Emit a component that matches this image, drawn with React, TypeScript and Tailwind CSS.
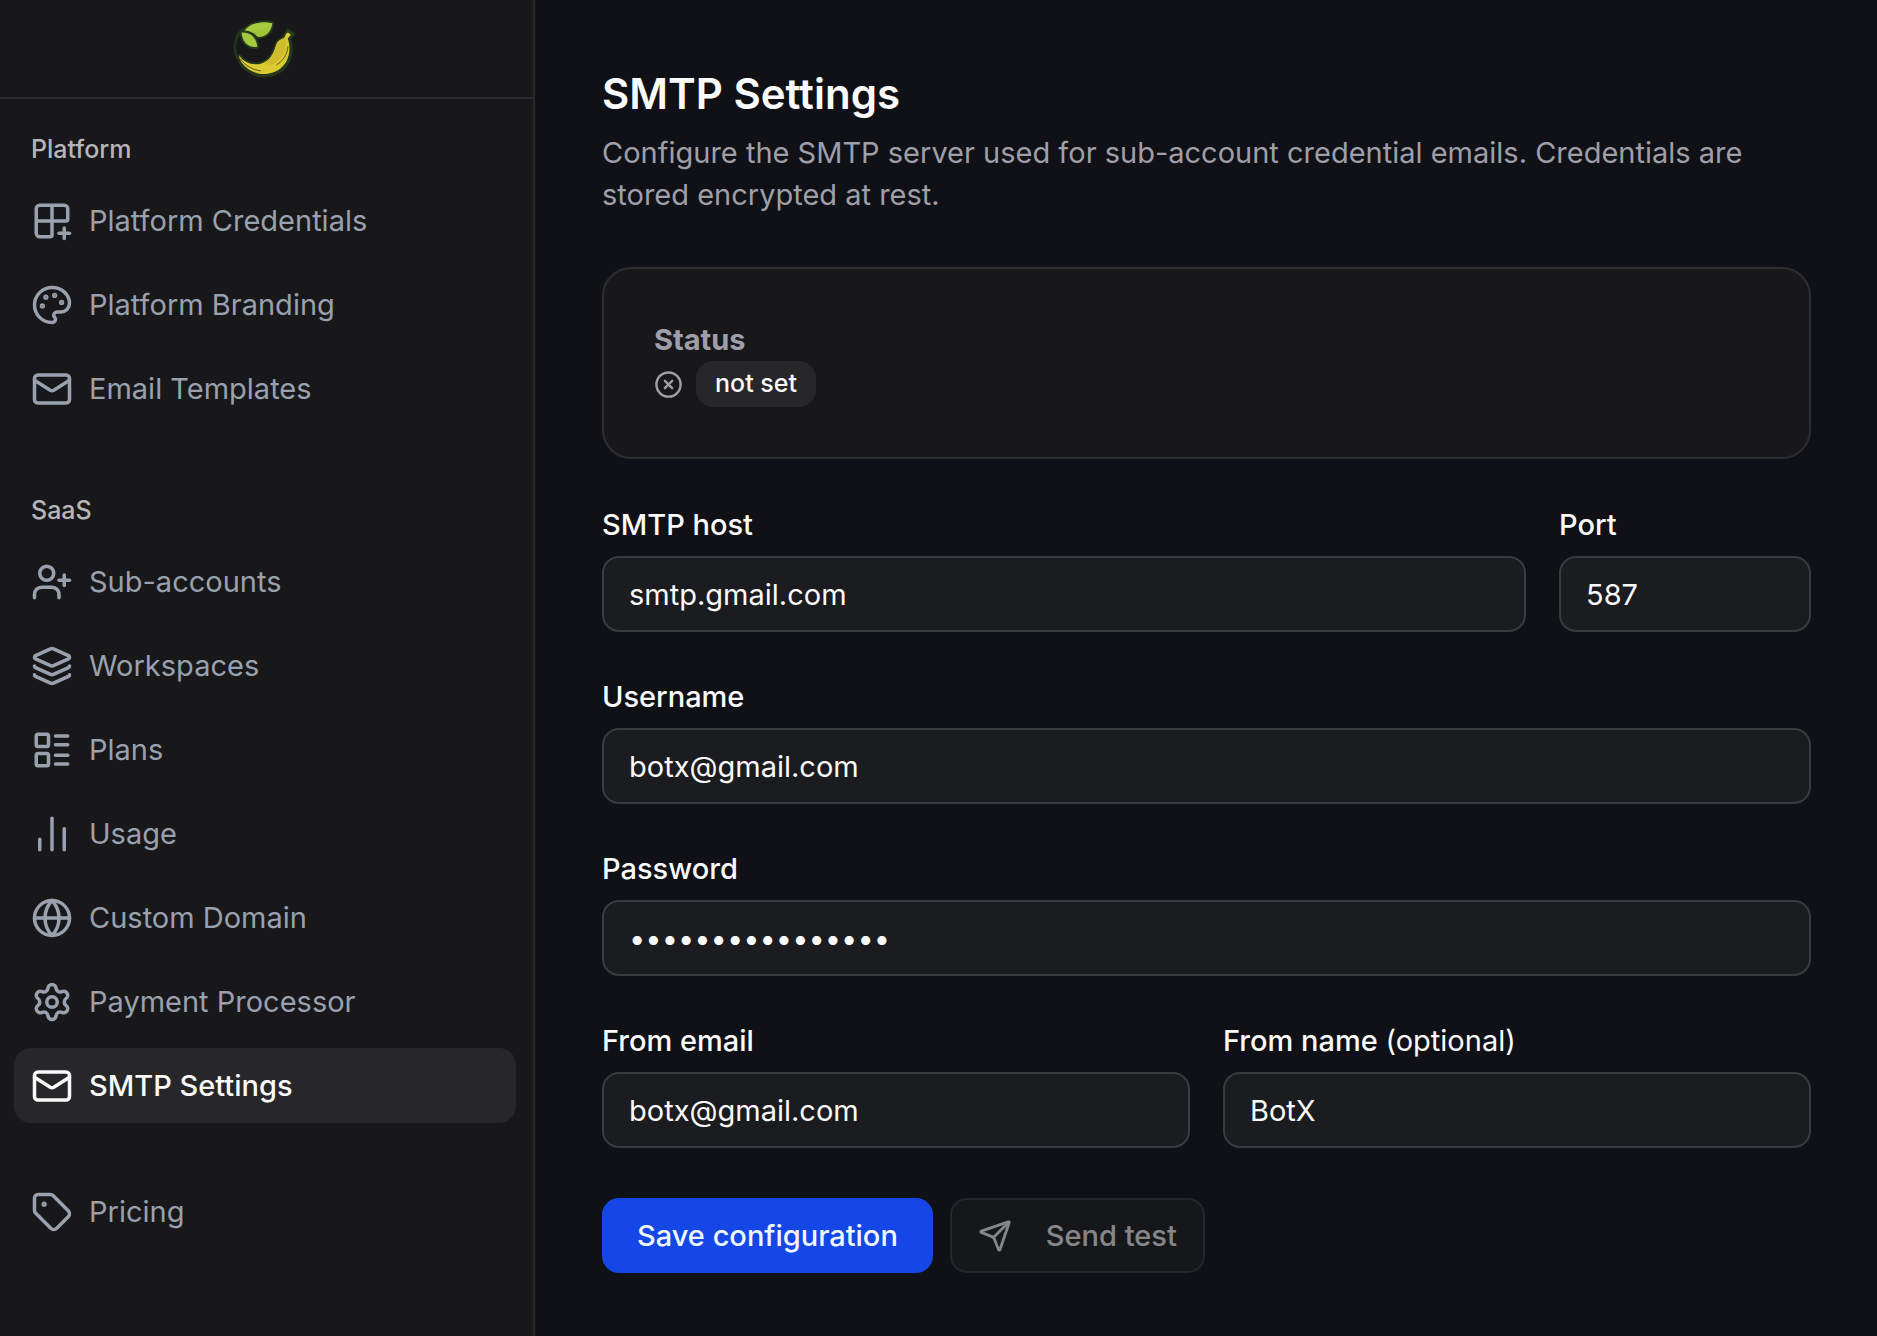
import { useState } from "react"
import type { ReactNode } from "react"
import {
    ChartNoAxesColumn,
    CircleX,
    Globe,
    Grid2x2Plus,
    Layers,
    LayoutList,
    Mail,
    Palette,
    Send,
    Settings,
    Tag,
    UserPlus,
    type LucideIcon
} from "lucide-react"

interface NavItem {
    label : string,
    icon : LucideIcon,
    active? : boolean
}

const platformItems : NavItem[] = [
    { label : "Platform Credentials", icon : Grid2x2Plus },
    { label : "Platform Branding", icon : Palette },
    { label : "Email Templates", icon : Mail },
]

const saasItems : NavItem[] = [
    { label : "Sub-accounts", icon : UserPlus },
    { label : "Workspaces", icon : Layers },
    { label : "Plans", icon : LayoutList },
    { label : "Usage", icon : ChartNoAxesColumn },
    { label : "Custom Domain", icon : Globe },
    { label : "Payment Processor", icon : Settings },
    { label : "SMTP Settings", icon : Mail, active : true },
]

const otherItems : NavItem[] = [
    { label : "Pricing", icon : Tag },
]

export default function App(){
    return (
        <div className="flex min-h-screen bg-[#101116] font-['Inter',sans-serif] text-[29px] text-zinc-50">
            <Sidebar />
            <SmtpSettings />
        </div>
    )
}

function Sidebar(){
    return (
        <aside className="w-[535px] shrink-0 border-r-2 border-[#26282e] bg-[#18181a]">
            <div className="flex h-[99px] items-center justify-center border-b-2 border-[#2c2d30] pr-1.5">
                <Logo />
            </div>
            <nav className="flex flex-col pl-[14px] pr-[17px]">
                <NavGroup title="Platform" items={platformItems} />
                <NavGroup title="SaaS" items={saasItems} />
                <NavGroup items={otherItems} />
            </nav>
        </aside>
    )
}

function NavGroup({title, items} : {title? : string, items : NavItem[]}){
    return (
        <div className="flex flex-col py-[17px]">
            {title && (
                <div className="flex h-[67px] items-center px-[17px] text-[25px] font-medium text-[#b6b6b8]">
                    {title}
                </div>
            )}
            <ul className="flex flex-col gap-[9px] pb-[17px]">
                {items.map(item => <NavLink key={item.label} item={item} />)}
            </ul>
        </div>
    )
}

function NavLink({item} : {item : NavItem}){
    const Icon = item.icon
    return (
        <li>
            <a
                href="#"
                className={item.active
                    ? "flex h-[75px] items-center gap-4 rounded-[17px] bg-[#27272a] px-[17px] font-medium text-zinc-50"
                    : "flex h-[75px] items-center gap-4 rounded-[17px] px-[17px] text-gray-400"}
            >
                <Icon className="size-[42px] shrink-0" />
                {item.label}
            </a>
        </li>
    )
}

// banana with two leaves
function Logo(){
    return (
        <svg viewBox="96 48 192 188" className="h-[63px] w-16" fill="none">
            <path d="M128 84C104 106 98 140 112 170" stroke="#22361d" strokeWidth="8" strokeLinecap="round" />
            <path
                d="M118 164C134 188 166 196 192 184C218 172 224 146 230 128C234 118 246 114 254 108L258 98L264 88L279 100L266 112C277 136 275 170 256 194C236 220 196 230 164 218C138 208 120 188 116 168Z"
                fill="#dbc92f"
                stroke="#26391d"
                strokeWidth="11"
                strokeLinejoin="round"
            />
            <path d="M118 164C134 188 166 196 192 184C218 172 224 146 230 128C234 118 246 114 254 108L258 98L264 94L273 101L263 112C272 136 270 168 252 191C232 216 196 225 166 214C140 204 122 186 118 168Z" fill="#dccb30" />
            <path d="M192 184C218 172 224 146 230 128C234 118 246 114 256 110C264 140 252 164 230 184C214 194 202 192 192 184Z" fill="#cfbd2e" />
            <path d="M122 174C138 196 158 206 182 209" stroke="#5c5a1c" strokeWidth="3" strokeLinecap="round" />
            <path d="M264 136C262 160 250 178 230 191" stroke="#5c5a1c" strokeWidth="3" strokeLinecap="round" />
            <path d="M134 88C150 66 184 60 217 66C214 92 196 110 172 107C164 94 150 90 134 88Z" fill="#9fc53a" stroke="#26391d" strokeWidth="11" strokeLinejoin="round" paintOrder="stroke" />
            <path d="M134 88C150 66 184 60 217 66C206 84 172 86 134 88Z" fill="#a8cc40" />
            <path d="M125 94C146 92 168 104 172 137C148 142 126 124 125 94Z" fill="#a3c93c" stroke="#26391d" strokeWidth="11" strokeLinejoin="round" paintOrder="stroke" />
        </svg>
    )
}

function SmtpSettings(){
    const[host , setHost] = useState("smtp.gmail.com");
    const[port , setPort] = useState("587");
    const[username , setUsername] = useState("botx@gmail.com");
    const[password , setPassword] = useState("smtp-secret-pass");
    const[fromEmail , setFromEmail] = useState("botx@gmail.com");
    const[fromName , setFromName] = useState("BotX");

    return (
        <main className="flex min-w-0 flex-1 flex-col gap-[51px] pt-[67px] pr-[66px] pb-[50px] pl-[67px]">
            <header className="flex flex-col gap-3">
                <h1 className="text-[42px] leading-[53px] font-semibold">SMTP Settings</h1>
                <p className="leading-[42px] text-[#9f9fa9]">
                    Configure the SMTP server used for sub-account credential emails. Credentials are stored encrypted at rest.
                </p>
            </header>

            <section className="rounded-[29px] border-2 border-[#2d2e30] bg-[#18181a] p-[50px]">
                <h2 className="leading-[42px] font-bold text-[#9f9fa9]">Status</h2>
                <div className="flex items-center gap-[13px]">
                    <CircleX className="size-[29px] text-[#9f9fa9]" />
                    <span className="flex h-[46px] items-center rounded-[17px] bg-[#27272a] px-[19px] text-[25px] font-medium">
                        not set
                    </span>
                </div>
            </section>

            <form className="flex flex-col gap-[50px]" onSubmit={e => e.preventDefault()}>
                <div className="grid grid-cols-[1fr_252px] gap-[33px]">
                    <Field id="host" label="SMTP host" value={host} onChange={setHost} />
                    <Field id="port" label="Port" value={port} onChange={setPort} />
                </div>
                <Field id="username" label="Username" value={username} onChange={setUsername} />
                <Field id="password" label="Password" type="password" value={password} onChange={setPassword} />
                <div className="grid grid-cols-2 gap-[33px]">
                    <Field id="fromEmail" label="From email" value={fromEmail} onChange={setFromEmail} />
                    <Field
                        id="fromName"
                        label={<>From name <span className="font-normal">(optional)</span></>}
                        value={fromName}
                        onChange={setFromName}
                    />
                </div>
                <div className="flex gap-[17px]">
                    <button type="submit" className="h-[75px] rounded-[17px] bg-[#1447e6] px-[35px] font-medium text-blue-50">
                        Save configuration
                    </button>
                    <button
                        type="button"
                        disabled
                        className="flex h-[75px] items-center gap-[34px] rounded-[17px] border-2 border-[#3a3b3f] bg-[#1c1d21] px-[26px] font-medium opacity-50"
                    >
                        <Send className="size-[34px]" />
                        Send test
                    </button>
                </div>
            </form>
        </main>
    )
}

interface fieldInterface {
    id : string,
    label : ReactNode,
    value : string,
    type? : string,
    onChange : (value : string) => void
}

function Field({id, label, value, type = "text", onChange} : fieldInterface){
    return (
        <div className="flex min-w-0 flex-col gap-[17px]">
            <label htmlFor={id} className="leading-[29px] font-medium">{label}</label>
            <input
                id={id}
                type={type}
                value={value}
                onChange={e => onChange(e.target.value)}
                className="h-[76px] w-full rounded-[17px] border-2 border-[#3a3b3f] bg-[#1b1c20] px-[25px] outline-none"
            />
        </div>
    )
}
